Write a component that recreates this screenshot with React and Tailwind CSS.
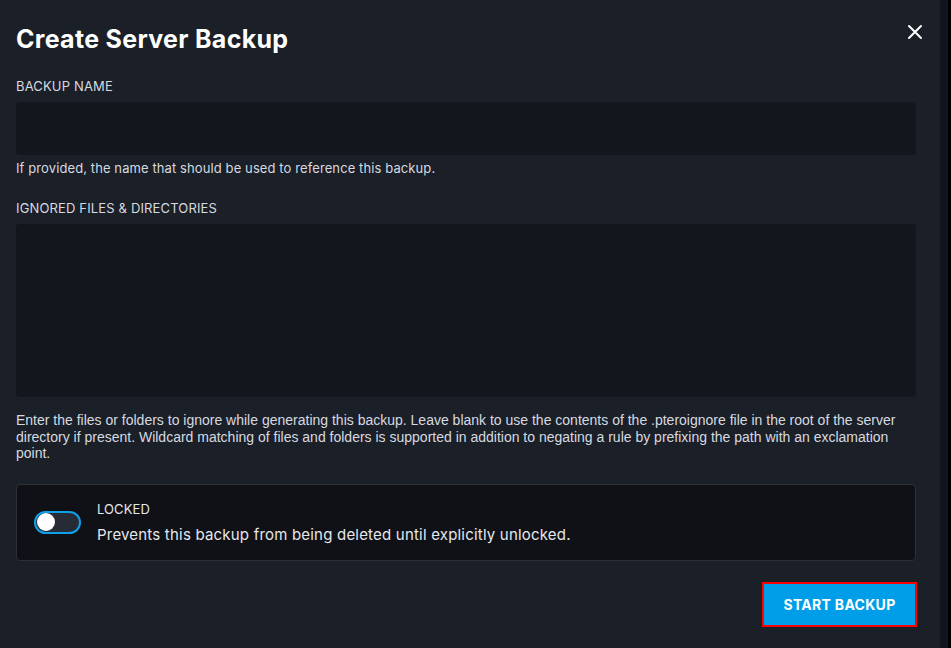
import React from "react";

export default function App() {
  return (
    <div className="flex h-[648px] w-[951px] overflow-hidden bg-[#1b1f27] text-white" style={{ fontFamily: "Inter, 'Open Sans', sans-serif" }}>
      <div className="flex w-[940px] flex-col px-4 pt-[22px]">
        <div className="flex items-center justify-between">
          <h1 className="text-[25px] font-bold leading-[34px] tracking-[0.3px] text-white">Create Server Backup</h1>
          <button className="mr-[1px] mt-[-14px] text-white">
            <svg width="16" height="16" viewBox="0 0 16 16" fill="none" stroke="currentColor" strokeWidth="2" strokeLinecap="round">
              <path d="M2 2L14 14M14 2L2 14" />
            </svg>
          </button>
        </div>
        <div className="w-[900px]">
          <label className="mt-[21px] block text-[13px] leading-[18px] tracking-[0.15px] text-[#d6dae0]">BACKUP NAME</label>
          <div className="mt-[7px] h-[53px] rounded-[4px] bg-[#13161d]" />
          <p className="mt-[4px] text-[13px] leading-[18px] tracking-[0.1px] text-[#d6dae0]">If provided, the name that should be used to reference this backup.</p>
          <label className="mt-[22px] block text-[13px] leading-[18px] tracking-[0.15px] text-[#d6dae0]">IGNORED FILES &amp; DIRECTORIES</label>
          <div className="mt-[7px] h-[173px] rounded-[4px] bg-[#13161d]" />
          <p className="mt-[15px] text-[14px] leading-[16.5px] text-[#d6dae0]" style={{ fontFamily: "'Liberation Sans', Arial, sans-serif", letterSpacing: "0px" }}>
            Enter the files or folders to ignore while generating this backup. Leave blank to use the contents of the .pteroignore file in the root of the server directory if present. Wildcard matching of files and folders is supported in addition to negating a rule by prefixing the path with an exclamation point.
          </p>
          <div className="mt-[22px] flex h-[77px] items-center rounded-[4px] border border-[#2b2f37] bg-[#0f1116] pl-[17px]">
            <div className="flex h-[23px] w-[47px] items-center rounded-full border-2 border-[#0ea0ea] bg-[#262b35] pl-[1px]">
              <div className="h-[18px] w-[18px] rounded-full bg-white" />
            </div>
            <div className="ml-[16px] flex flex-col">
              <span className="text-[13px] leading-[18px] tracking-[0.1px] text-[#e5e7eb]">LOCKED</span>
              <span className="mt-[7px] text-[15px] leading-[20px] tracking-[0.2px] text-[#e5e7eb]">Prevents this backup from being deleted until explicitly unlocked.</span>
            </div>
          </div>
          <div className="mt-[21px] flex justify-end">
            <button className="mr-[-1px] h-[45px] w-[155px] border-2 border-[#ff0000] bg-[#009ee8] text-[14px] font-bold tracking-[0.3px] text-white">
              START BACKUP
            </button>
          </div>
        </div>
      </div>
      <div className="h-full w-[8px] bg-[#10141c]" />
      <div className="h-full w-[3px] bg-black" />
    </div>
  );
}
